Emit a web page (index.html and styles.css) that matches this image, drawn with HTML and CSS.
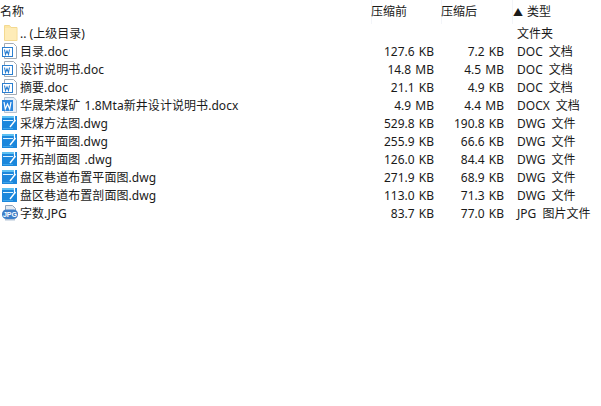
FILE: index.html

```html
<!DOCTYPE html>
<html lang="zh-CN">
<head>
    <meta charset="UTF-8">
    <title>文件列表</title>
    <link rel="stylesheet" href="styles.css">
</head>
<body>
<svg class="defs" width="0" height="0">
    <symbol id="ico-folder" viewBox="0 0 16 16">
        <path d="M1.500 0.500h5l1.500 2h6v13h-12.500z" fill="#fde6a4" stroke="#f3d990" stroke-width="1"/>
        <rect x="2" y="3" width="11.500" height="12" fill="#feecb8"/>
    </symbol>
    <symbol id="ico-doc" viewBox="0 0 16 16">
        <path d="M2.500 0.500h9l3 3v12h-12z" fill="#fff" stroke="#a3abb5"/>
        <rect x="0.500" y="4.500" width="10" height="9" fill="#fff" stroke="#2b7fd0"/>
        <path d="M2.500 6.500l1 5 1.500-3.500 1.500 3.500 1-5" fill="none" stroke="#2b7fd0" stroke-width="1.100"/>
    </symbol>
    <symbol id="ico-docx" viewBox="0 0 16 16">
        <path d="M2.500 0.500h9.500l2.500 3v12h-12z" fill="#e8f0f8" stroke="#b4c1cf"/>
        <rect x="0" y="3" width="11" height="11" fill="#2b86de"/>
        <path d="M2 5l1.300 7 2.200-5 2.200 5 1.300-7" fill="none" stroke="#fff" stroke-width="1.200"/>
    </symbol>
    <symbol id="ico-dwg" viewBox="0 0 16 16">
        <rect x="0" y="1" width="15" height="14" fill="#1b87dc"/>
        <rect x="0" y="1" width="12" height="2" fill="#5cc0f2"/>
        <rect x="1" y="5" width="10" height="1" fill="#dff3ff"/>
        <path d="M12.500 0v7" stroke="#fff" stroke-width="1.200"/>
        <path d="M8 12L13.500 5" stroke="#fff" stroke-width="1.400"/>
        <rect x="1" y="13" width="10" height="1" fill="#3fa6ea"/>
    </symbol>
</svg>

<div class="file-list">
    <div class="row head">
        <div class="name">名称</div>
        <div class="col-head">压缩前</div>
        <div class="col-head">压缩后</div>
        <div class="col-head"><span class="arrow">▲</span> 类型</div>
    </div>

    <div class="row first">
        <div class="name parent"><svg class="ico"><use href="#ico-folder"/></svg>.. (上级目录)</div>
        <div class="size"></div><div class="size"></div>
        <div class="type">文件夹</div>
    </div>
    <div class="row">
        <div class="name"><svg class="ico"><use href="#ico-doc"/></svg>目录.doc</div>
        <div class="size">127.6 KB</div><div class="size">7.2 KB</div>
        <div class="type">DOC 文档</div>
    </div>
    <div class="row">
        <div class="name"><svg class="ico"><use href="#ico-doc"/></svg>设计说明书.doc</div>
        <div class="size">14.8 MB</div><div class="size">4.5 MB</div>
        <div class="type">DOC 文档</div>
    </div>
    <div class="row">
        <div class="name"><svg class="ico"><use href="#ico-doc"/></svg>摘要.doc</div>
        <div class="size">21.1 KB</div><div class="size">4.9 KB</div>
        <div class="type">DOC 文档</div>
    </div>
    <div class="row">
        <div class="name"><svg class="ico"><use href="#ico-docx"/></svg>华晟荣煤矿 1.8Mta新井设计说明书.docx</div>
        <div class="size">4.9 MB</div><div class="size">4.4 MB</div>
        <div class="type">DOCX 文档</div>
    </div>
    <div class="row">
        <div class="name"><svg class="ico"><use href="#ico-dwg"/></svg>采煤方法图.dwg</div>
        <div class="size">529.8 KB</div><div class="size">190.8 KB</div>
        <div class="type">DWG 文件</div>
    </div>
    <div class="row">
        <div class="name"><svg class="ico"><use href="#ico-dwg"/></svg>开拓平面图.dwg</div>
        <div class="size">255.9 KB</div><div class="size">66.6 KB</div>
        <div class="type">DWG 文件</div>
    </div>
    <div class="row">
        <div class="name"><svg class="ico"><use href="#ico-dwg"/></svg>开拓剖面图 .dwg</div>
        <div class="size">126.0 KB</div><div class="size">84.4 KB</div>
        <div class="type">DWG 文件</div>
    </div>
    <div class="row">
        <div class="name"><svg class="ico"><use href="#ico-dwg"/></svg>盘区巷道布置平面图.dwg</div>
        <div class="size">271.9 KB</div><div class="size">68.9 KB</div>
        <div class="type">DWG 文件</div>
    </div>
    <div class="row">
        <div class="name"><svg class="ico"><use href="#ico-dwg"/></svg>盘区巷道布置剖面图.dwg</div>
        <div class="size">113.0 KB</div><div class="size">71.3 KB</div>
        <div class="type">DWG 文件</div>
    </div>
    <div class="row">
        <div class="name">
            <svg class="ico" viewBox="0 0 16 16">
                <path d="M3.500 0.500h7l3 3v7h-10z" fill="#e3e9f0" stroke="#8fa3ba"/>
                <rect x="0" y="4.500" width="16" height="9.500" rx="4.500" fill="#3f7fc8"/>
                <text x="8" y="12" class="jpg-label">JPG</text>
                <path d="M3 14h10v1.500h-10z" fill="#b4c4d6"/>
            </svg>字数.JPG
        </div>
        <div class="size">83.7 KB</div><div class="size">77.0 KB</div>
        <div class="type">JPG 图片文件</div>
    </div>
</div>
</body>
</html>
```

FILE: styles.css

```css
body {
    margin: 0;
    background-color: #fff;
    color: #1a1a1a;
    font-family: "Noto Sans", "Noto Sans CJK SC", sans-serif;
    font-size: 12px;
    overflow: hidden;
}
.defs {
    display: block;
    height: 0;
}
.row {
    display: grid;
    grid-template-columns: 361px 73px 70px 97px;
    height: 18px;
    line-height: 20px;
    white-space: nowrap;
}
.head {
    grid-template-columns: 371px 70px 71px 89px;
    height: 20px;
    line-height: 24px;
}
.first {
    margin-top: 4px;
}
.name {
    display: flex;
    align-items: flex-start;
    gap: 2px;
    padding-left: 2px;
    letter-spacing: 0.06px;
    word-spacing: 1px;
}
.head .name {
    padding-left: 0;
}
.parent {
    padding-left: 3px;
    gap: 1px;
    letter-spacing: 0;
    word-spacing: 0;
}
.ico {
    width: 16px;
    height: 16px;
    margin-top: 1px;
    flex: none;
}
.jpg-label {
    font-family: "Liberation Sans", sans-serif;
    font-size: 7px;
    font-weight: bold;
    fill: #fff;
    text-anchor: middle;
}
.col-head {
    box-shadow: inset 1px 0 0 #f3f5f9;
    word-spacing: 1px;
}
.arrow {
    font-size: 10px;
    margin-left: 1px;
}
.size {
    text-align: right;
    word-spacing: 1px;
}
.type {
    padding-left: 13px;
    word-spacing: 3px;
}
```
